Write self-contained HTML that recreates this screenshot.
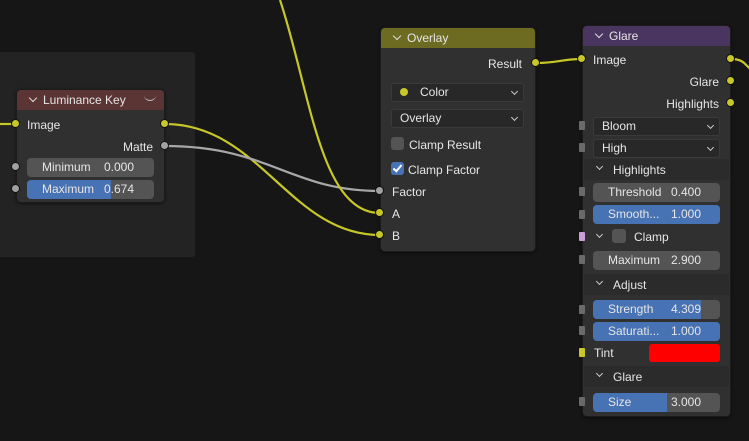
<!DOCTYPE html>
<html><head><meta charset="utf-8"><style>
*{box-sizing:border-box;margin:0;padding:0}
body{width:749px;height:441px;background:#161616;position:relative;overflow:hidden;font-family:"Liberation Sans","DejaVu Sans",sans-serif;font-size:12px;color:#e6e6e6}
.a{position:absolute}
.node{position:absolute;background:#303030;border-radius:5px;border:1px solid #1c1c1c;box-shadow:0 1px 3px rgba(0,0,0,.5)}
.hdr{position:absolute;left:0;right:0;top:0;height:20px;border-radius:4px 4px 0 0;padding-left:12px;line-height:20px}
.hdr:before{content:"";position:absolute;left:13px;top:5px;width:5px;height:5px;border-right:1.3px solid #ddd;border-bottom:1.3px solid #ddd;transform:rotate(45deg)}
.hdr span{margin-left:14px}
.t{position:absolute;white-space:nowrap;line-height:14px}
.fld{position:absolute;height:19px;background:#545454;border-radius:4px;line-height:19px;overflow:hidden}
.fld .fill{position:absolute;left:0;top:0;bottom:0;background:#4772b3}
.fld .l,.fld .v{position:absolute;top:0;white-space:nowrap}
.dd{position:absolute;height:19px;background:#282828;border:1px solid #3a3a3a;border-radius:3px;line-height:17px;padding-left:8px}
.dd:after{content:"";position:absolute;right:6px;top:5px;width:4px;height:4px;border-right:1.2px solid #ccc;border-bottom:1.2px solid #ccc;transform:rotate(45deg)}
.sock{position:absolute;width:9px;height:9px;border-radius:50%;border:1px solid #111}
.y{background:#c7c729}.g{background:#a1a1a1}
.sq{position:absolute;width:6px;height:9px;background:#6a6a6a;border-radius:1px}
.pan{position:absolute;left:1px;right:1px;height:21px;background:#2b2b2b}
.chev{position:absolute;width:5px;height:5px;border-right:1.3px solid #ccc;border-bottom:1.3px solid #ccc;transform:rotate(45deg)}
</style></head><body>
<div class="a" style="left:0;top:52px;width:195px;height:205px;background:#232323;border-radius:0 3px 3px 0"></div>

<svg class="a" style="left:0;top:0" width="749" height="441">
<g fill="none" stroke-width="2.2">
<path d="M0 124 L16 124" stroke="#c7c729"/>
<path d="M165 124 C260 124 290 235 380 235" stroke="#c7c729"/>
<path d="M165 146 C270 146 290 191 380 191" stroke="#a8a8a8"/>
<path d="M280 0 C310 90 320 213 380 213" stroke="#c7c729"/>
<path d="M536 63 C560 63 560 59 582 59" stroke="#c7c729"/>
<path d="M731 59 C745 59 745 66 752 70" stroke="#c7c729"/>
</g></svg>

<!-- Luminance Key -->
<div class="node" style="left:16px;top:89px;width:149px;height:114px">
 <div class="hdr" style="background:#5b3434"><span>Luminance Key</span></div>
 <div class="a" style="left:127px;top:4px;width:12px;height:7px;border-bottom:1.2px solid #bbb;border-radius:0 0 8px 8px"></div>
 <div class="t" style="left:10px;top:28px">Image</div>
 <div class="t" style="right:11px;top:50px">Matte</div>
 <div class="fld" style="left:10px;top:68px;width:127px"><span class="l" style="left:15px">Minimum</span><span class="v" style="left:77px">0.000</span></div>
 <div class="fld" style="left:10px;top:90px;width:127px"><div class="fill" style="width:84px"></div><span class="l" style="left:15px">Maximum</span><span class="v" style="left:77px">0.674</span></div>
</div>
<div class="sock y" style="left:11px;top:119px"></div>
<div class="sock y" style="left:160px;top:119px"></div>
<div class="sock g" style="left:160px;top:141px"></div>
<div class="sock g" style="left:11px;top:162px"></div>
<div class="sock g" style="left:11px;top:184px"></div>

<!-- Overlay -->
<div class="node" style="left:380px;top:27px;width:156px;height:225px">
 <div class="hdr" style="background:#6d6b22"><span>Overlay</span></div>
 <div class="t" style="right:13px;top:29px">Result</div>
 <div class="dd" style="left:10px;top:55px;width:133px;padding-left:28px">Color<div class="a" style="left:8px;top:4px;width:8px;height:8px;border-radius:50%;background:#c7c729"></div></div>
 <div class="dd" style="left:10px;top:81px;width:133px">Overlay</div>
 <div class="a" style="left:10px;top:109px;width:13px;height:13px;background:#545454;border-radius:3px"></div>
 <div class="t" style="left:28px;top:110px">Clamp Result</div>
 <div class="a" style="left:10px;top:134px;width:13px;height:13px;background:#4772b3;border-radius:3px"><div class="a" style="left:4px;top:1px;width:5px;height:9px;border-right:2px solid #fff;border-bottom:2px solid #fff;transform:rotate(40deg)"></div></div>
 <div class="t" style="left:27px;top:135px">Clamp Factor</div>
 <div class="t" style="left:11px;top:157px">Factor</div>
 <div class="t" style="left:11px;top:179px">A</div>
 <div class="t" style="left:11px;top:201px">B</div>
</div>
<div class="sock y" style="left:531px;top:58px"></div>
<div class="sock g" style="left:375px;top:186px"></div>
<div class="sock y" style="left:375px;top:208px"></div>
<div class="sock y" style="left:375px;top:230px"></div>

<!-- Glare -->
<div class="node" style="left:582px;top:25px;width:149px;height:392px">
 <div class="hdr" style="background:#4a3460"><span>Glare</span></div>
 <div class="t" style="left:10px;top:27px">Image</div>
 <div class="t" style="right:11px;top:49px">Glare</div>
 <div class="t" style="right:11px;top:71px">Highlights</div>
 <div class="dd" style="left:10px;top:91px;width:127px">Bloom</div>
 <div class="dd" style="left:10px;top:113px;width:127px">High</div>
 <div class="pan" style="top:133px"></div>
 <div class="chev" style="left:14px;top:138px"></div><div class="t" style="left:30px;top:137px">Highlights</div>
 <div class="fld" style="left:10px;top:157px;width:127px"><span class="l" style="left:15px">Threshold</span><span class="v" style="left:78px">0.400</span></div>
 <div class="fld" style="left:10px;top:179px;width:127px"><div class="fill" style="width:127px"></div><span class="l" style="left:15px">Smooth...</span><span class="v" style="left:78px">1.000</span></div>
 <div class="chev" style="left:14px;top:206px"></div>
 <div class="a" style="left:29px;top:203px;width:14px;height:14px;background:#545454;border-radius:3px"></div>
 <div class="t" style="left:51px;top:204px">Clamp</div>
 <div class="fld" style="left:10px;top:225px;width:127px"><span class="l" style="left:15px">Maximum</span><span class="v" style="left:78px">2.900</span></div>
 <div class="pan" style="top:248px"></div>
 <div class="chev" style="left:14px;top:253px"></div><div class="t" style="left:30px;top:252px">Adjust</div>
 <div class="fld" style="left:10px;top:274px;width:127px"><div class="fill" style="width:108px"></div><span class="l" style="left:15px">Strength</span><span class="v" style="left:78px">4.309</span></div>
 <div class="fld" style="left:10px;top:296px;width:127px"><div class="fill" style="width:127px"></div><span class="l" style="left:15px">Saturati...</span><span class="v" style="left:78px">1.000</span></div>
 <div class="t" style="left:11px;top:320px">Tint</div>
 <div class="a" style="left:66px;top:318px;width:71px;height:18px;background:#ff0000;border-radius:3px"></div>
 <div class="pan" style="top:340px"></div>
 <div class="chev" style="left:14px;top:345px"></div><div class="t" style="left:30px;top:344px">Glare</div>
 <div class="fld" style="left:10px;top:367px;width:127px"><div class="fill" style="width:74px"></div><span class="l" style="left:15px">Size</span><span class="v" style="left:78px">3.000</span></div>
</div>
<div class="sock y" style="left:577px;top:54px"></div>
<div class="sock y" style="left:726px;top:54px"></div>
<div class="sock y" style="left:726px;top:76px"></div>
<div class="sock y" style="left:726px;top:98px"></div>
<div class="sq" style="left:579px;top:121px"></div>
<div class="sq" style="left:579px;top:143px"></div>
<div class="sq" style="left:579px;top:187px"></div>
<div class="sq" style="left:579px;top:210px"></div>
<div class="sq" style="left:579px;top:232px;background:#c9a0d8"></div>
<div class="sq" style="left:579px;top:255px"></div>
<div class="sq" style="left:579px;top:305px"></div>
<div class="sq" style="left:579px;top:326px"></div>
<div class="sq" style="left:579px;top:348px;background:#c7c729"></div>
<div class="sq" style="left:579px;top:397px"></div>
</body></html>
